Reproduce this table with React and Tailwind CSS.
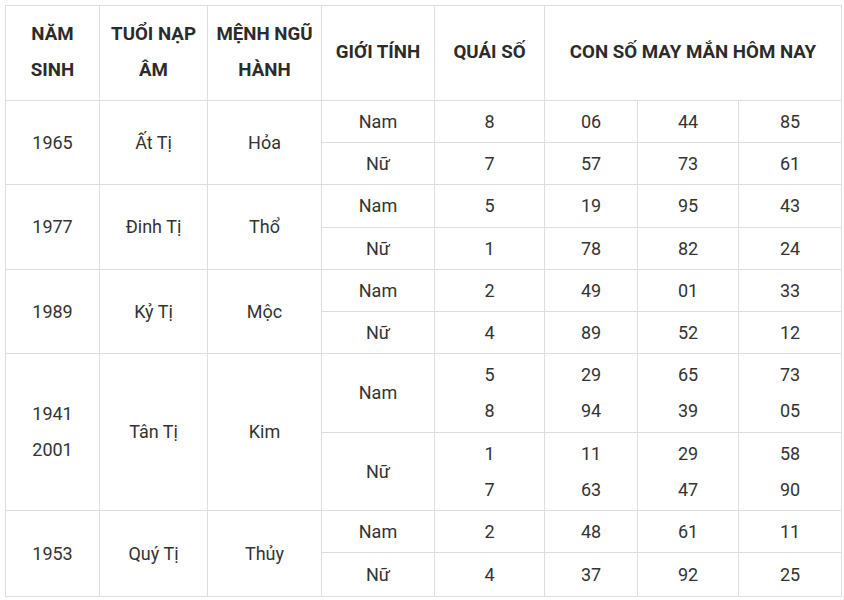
// App.jsx
// Lucky number table — year of birth, nạp âm, ngũ hành, gender, quái số and lucky numbers.

const ROWS = [
  {
    years: ['1965'], tuoi: 'Ất Tị', menh: 'Hỏa',
    genders: [
      { g: 'Nam', q: ['8'], nums: [['06'], ['44'], ['85']], h: 'h-[42px]' },
      { g: 'Nữ', q: ['7'], nums: [['57'], ['73'], ['61']], h: 'h-[42px]' },
    ],
  },
  {
    years: ['1977'], tuoi: 'Đinh Tị', menh: 'Thổ',
    genders: [
      { g: 'Nam', q: ['5'], nums: [['19'], ['95'], ['43']], h: 'h-[43px]' },
      { g: 'Nữ', q: ['1'], nums: [['78'], ['82'], ['24']], h: 'h-[42px]' },
    ],
  },
  {
    years: ['1989'], tuoi: 'Kỷ Tị', menh: 'Mộc',
    genders: [
      { g: 'Nam', q: ['2'], nums: [['49'], ['01'], ['33']], h: 'h-[42px]' },
      { g: 'Nữ', q: ['4'], nums: [['89'], ['52'], ['12']], h: 'h-[42px]' },
    ],
  },
  {
    years: ['1941', '2001'], tuoi: 'Tân Tị', menh: 'Kim',
    genders: [
      { g: 'Nam', q: ['5', '8'], nums: [['29', '94'], ['65', '39'], ['73', '05']], h: 'h-[79px]' },
      { g: 'Nữ', q: ['1', '7'], nums: [['11', '63'], ['29', '47'], ['58', '90']], h: 'h-[78px]' },
    ],
  },
  {
    years: ['1953'], tuoi: 'Quý Tị', menh: 'Thủy',
    genders: [
      { g: 'Nam', q: ['2'], nums: [['48'], ['61'], ['11']], h: 'h-[42px]' },
      { g: 'Nữ', q: ['4'], nums: [['37'], ['92'], ['25']], h: 'h-[44px]' },
    ],
  },
];

const cell = 'border border-[#dddddd] text-center align-middle p-0';
const head = 'border border-[#dddddd] text-center align-middle p-0 pb-[3px]';

function Lines({ items }) {
  return items.map((t, i) => <div key={i}>{t}</div>);
}

export default function App() {
  return (
    <div className="bg-white w-[844px] h-[600px] pt-[5px] pl-[5px]">
      <table
        className="table-fixed border-collapse w-[836px] text-[18px] leading-[36px] text-[#333333]"
        style={{ fontFamily: 'Roboto, "Liberation Sans", sans-serif' }}
      >
        <colgroup>
          <col className="w-[94px]" />
          <col className="w-[108px]" />
          <col className="w-[114px]" />
          <col className="w-[113px]" />
          <col className="w-[110px]" />
          <col className="w-[93px]" />
          <col className="w-[101px]" />
          <col className="w-[103px]" />
        </colgroup>
        <thead>
          <tr className="h-[95px] font-bold text-[18.7px] text-[#2b2b2b]">
            <th className={head}>NĂM<br />SINH</th>
            <th className={head}>TUỔI NẠP<br />ÂM</th>
            <th className={head}>MỆNH NGŨ<br />HÀNH</th>
            <th className={head}>GIỚI TÍNH</th>
            <th className={head}>QUÁI SỐ</th>
            <th className={head} colSpan={3}>CON SỐ MAY MẮN HÔM NAY</th>
          </tr>
        </thead>
        <tbody>
          {ROWS.map(row =>
            row.genders.map((gr, gi) => (
              <tr key={row.tuoi + gr.g} className={gr.h}>
                {gi === 0 && (
                  <>
                    <td className={cell} rowSpan={2}><Lines items={row.years} /></td>
                    <td className={cell} rowSpan={2}>{row.tuoi}</td>
                    <td className={cell} rowSpan={2}>{row.menh}</td>
                  </>
                )}
                <td className={cell}>{gr.g}</td>
                <td className={cell}><Lines items={gr.q} /></td>
                {gr.nums.map((n, ni) => (
                  <td key={ni} className={cell}><Lines items={n} /></td>
                ))}
              </tr>
            ))
          )}
        </tbody>
      </table>
    </div>
  );
}
